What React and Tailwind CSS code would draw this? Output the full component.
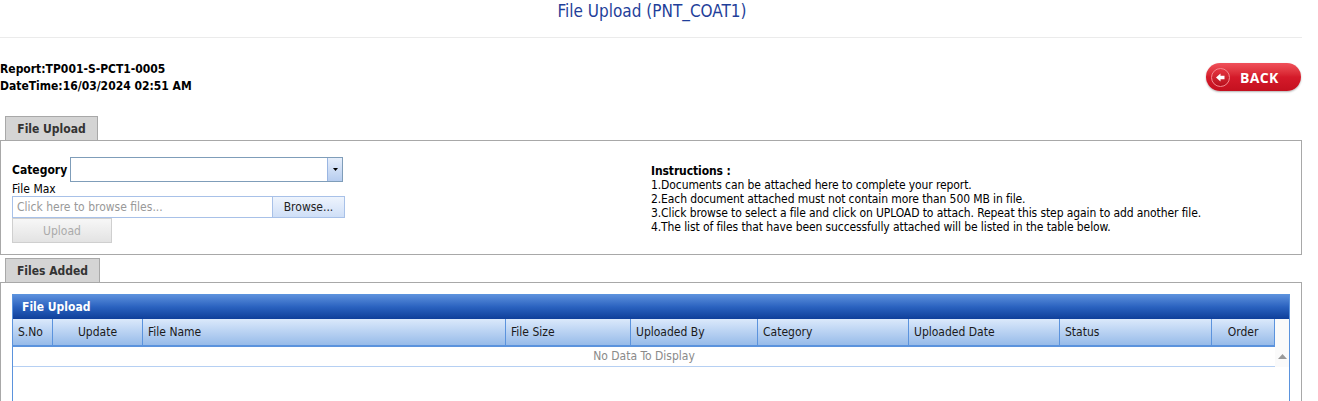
import { useState } from 'react'

const COLUMNS = [
  { label: 'S.No', w: 'w-[40px]', align: 'text-left' },
  { label: 'Update', w: 'w-[90px]', align: 'text-center' },
  { label: 'File Name', w: 'w-[363px]', align: 'text-left' },
  { label: 'File Size', w: 'w-[125px]', align: 'text-left' },
  { label: 'Uploaded By', w: 'w-[127px]', align: 'text-left' },
  { label: 'Category', w: 'w-[151px]', align: 'text-left' },
  { label: 'Uploaded Date', w: 'w-[151px]', align: 'text-left' },
  { label: 'Status', w: 'w-[152px]', align: 'text-left' },
  { label: 'Order', w: 'w-[63px]', align: 'text-center' },
]

const INSTRUCTIONS = [
  '1.Documents can be attached here to complete your report.',
  '2.Each document attached must not contain more than 500 MB in file.',
  '3.Click browse to select a file and click on UPLOAD to attach. Repeat this step again to add another file.',
  '4.The list of files that have been successfully attached will be listed in the table below.',
]

function Tab({ label, width }) {
  return (
    <div
      className={`ml-[5px] ${width} h-[24px] bg-[#d4d4d4] border border-b-0 border-[#a8a8a8] text-[12px] font-bold text-[#333] flex items-center justify-center`}
    >
      {label}
    </div>
  )
}

function BackButton() {
  return (
    <button className="w-[95px] h-[28px] rounded-full bg-gradient-to-b from-[#f0505a] via-[#d51a2a] to-[#c4101f] shadow-[0_1px_2px_rgba(0,0,0,0.3)] flex items-center pl-[5px] gap-[10px]">
      <span className="w-[19px] h-[19px] rounded-full bg-gradient-to-b from-[#e63440] to-[#b80e1c] border border-[#f38a90] flex items-center justify-center">
        <svg width="11" height="11" viewBox="0 0 11 11">
          <path d="M1 5.5 L5.5 1.5 L5.5 3.8 L9.5 3.8 L9.5 7.2 L5.5 7.2 L5.5 9.5 Z" fill="#fff" />
        </svg>
      </span>
      <span className="text-white font-bold text-[14px] tracking-[0.3px] font-['Open_Sans',sans-serif]">BACK</span>
    </button>
  )
}

export default function App() {
  const [category, setCategory] = useState('')

  return (
    <div className="w-[1318px] h-[401px] overflow-hidden bg-white font-['DejaVu_Sans_Condensed','DejaVu_Sans',sans-serif] text-[12px] text-black">
      <div className="w-[1302px]">
        {/* Title */}
        <div className="h-[38px] border-b border-[#ebebeb] flex justify-center pt-[1px]">
          <h1 className="text-[17px] text-[#1f3f9a] leading-[20px] ml-[2px]">File Upload (PNT_COAT1)</h1>
        </div>

        {/* Report info */}
        <div className="flex justify-between items-start pt-[23px] h-[78px]">
          <div className="font-bold leading-[17px] text-[12px]">
            <div>Report:TP001-S-PCT1-0005</div>
            <div>DateTime:16/03/2024 02:51 AM</div>
          </div>
          <div className="pt-[2px] pr-[1px]">
            <BackButton />
          </div>
        </div>

        {/* File upload panel */}
        <Tab label="File Upload" width="w-[93px]" />
        <div className="border border-[#a8a8a8] h-[115px] flex">
          <div className="w-[640px] pl-[11px] pt-[16px]">
            <div className="flex items-center gap-[2px]">
              <span className="font-bold text-[12px] w-[56px]">Category</span>
              <div className="w-[273px] h-[25px] border border-[#7f9db9] flex">
                <select
                  value={category}
                  onChange={(e) => setCategory(e.target.value)}
                  className="flex-1 appearance-none outline-none bg-white"
                >
                  <option value=""></option>
                </select>
                <div className="w-[15px] bg-gradient-to-b from-[#e6eefb] to-[#b7cdef] border-l border-[#9ab6e2] flex items-center justify-center">
                  <svg width="5" height="3" viewBox="0 0 5 3">
                    <path d="M0 0 L5 0 L2.5 3 Z" fill="#000" />
                  </svg>
                </div>
              </div>
            </div>
            <div className="leading-[14px]">File Max</div>
            <div className="flex">
              <div className="w-[261px] h-[22px] border border-[#a8c1e8] flex items-center pl-[4px] text-[#999]">
                Click here to browse files...
              </div>
              <div className="w-[72px] h-[22px] border border-l-0 border-[#a8c1e8] bg-gradient-to-b from-[#eef4fd] to-[#cfdff7] flex items-center justify-center text-[#222]">
                Browse...
              </div>
            </div>
            <div className="w-[100px] h-[25px] border border-[#cfcfcf] bg-gradient-to-b from-[#f7f7f7] to-[#e3e3e3] text-[#aaa] flex items-center justify-center">
              Upload
            </div>
          </div>
          <div className="pl-[10px] pt-[23px] leading-[14px] text-[12px] tracking-[-0.1px]">
            <div className="font-bold">Instructions :</div>
            {INSTRUCTIONS.map((line) => (
              <div key={line}>{line}</div>
            ))}
          </div>
        </div>

        {/* Files added panel */}
        <div className="mt-[3px]">
          <Tab label="Files Added" width="w-[95px]" />
        </div>
        <div className="border border-[#a8a8a8] border-b-0 h-[200px] px-[11px] pt-[11px]">
          <div className="border border-[#5b93dd] border-b-0 h-[200px]">
            <div className="h-[24px] bg-gradient-to-b from-[#5b8fdc] via-[#2a62bf] to-[#0f3f9a] text-white font-bold flex items-center pl-[9px] text-[12px]">
              File Upload
            </div>
            <div className="flex">
              <div className="flex-1">
                <div className="flex h-[28px] bg-gradient-to-b from-[#dbe9fb] to-[#97bbe9] border-b-2 border-[#5b93dd]">
                  {COLUMNS.map((c) => (
                    <div
                      key={c.label}
                      className={`${c.w} ${c.align} border-r border-[#5b93dd] px-[5px] flex items-center text-[#1a1a1a] ${c.align === 'text-center' ? 'justify-center' : ''}`}
                    >
                      {c.label}
                    </div>
                  ))}
                </div>
                <div className="h-[20px] border-b border-[#b6d0f3] text-center text-[#8a8a8a] leading-[18px]">
                  No Data To Display
                </div>
              </div>
              <div className="w-[16px] bg-[#fafafa] flex flex-col items-center pt-[35px]">
                <svg width="9" height="5" viewBox="0 0 9 5">
                  <path d="M0 5 L4.5 0 L9 5 Z" fill="#999" />
                </svg>
              </div>
            </div>
          </div>
        </div>
      </div>
    </div>
  )
}
